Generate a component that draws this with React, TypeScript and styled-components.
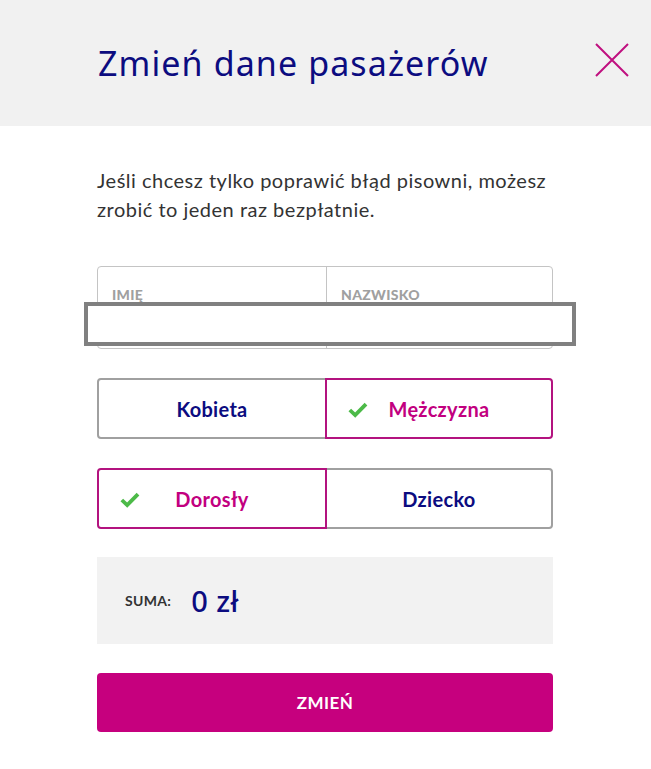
import React from "react";
import styled, { createGlobalStyle } from "styled-components";

const GlobalStyle = createGlobalStyle`
  body {
    margin: 0;
    background: #ffffff;
    font-family: Lato, "Noto Sans", sans-serif;
  }
`;

const Page = styled.div`
  width: 651px;
  min-height: 769px;
  background: #fff;
`;

const Header = styled.header`
  height: 126px;
  background: #f1f1f1;
  display: flex;
  align-items: center;
  justify-content: space-between;
  padding: 0 22px 0 98px;
  box-sizing: border-box;
`;

const Title = styled.h1`
  margin: 0;
  font-family: "Noto Sans", sans-serif;
  font-weight: 400;
  font-size: 34px;
  color: #0c0c80;
  letter-spacing: 1.1px;
`;

const CloseButton = styled.button`
  width: 34px;
  height: 34px;
  padding: 0;
  border: none;
  background: none;
  margin-top: -6px;
  cursor: pointer;
`;

const Body = styled.main`
  padding: 40px 98px 0 97px;
  display: flex;
  flex-direction: column;
`;

const Intro = styled.p`
  margin: 0 0 42px;
  font-size: 20px;
  line-height: 29px;
  letter-spacing: 0.5px;
  color: #333;
`;

const Fields = styled.div`
  position: relative;
  height: 83px;
  border: 1px solid #c4c4c4;
  border-radius: 4px;
  box-sizing: border-box;
  display: grid;
  grid-template-columns: 229px 1fr;
`;

const Field = styled.div<{ $divider?: boolean }>`
  padding: 17px 14px;
  border-right: ${(p) => (p.$divider ? "1px solid #c4c4c4" : "none")};
`;

const FieldLabel = styled.span`
  font-size: 14px;
  font-weight: 900;
  color: #a0a0a0;
  letter-spacing: 0.3px;
`;

const Redaction = styled.div`
  position: absolute;
  left: -14px;
  top: 35px;
  width: 492px;
  height: 44px;
  box-sizing: border-box;
  border: 4px solid #808080;
  background: #fff;
`;

const Toggle = styled.div`
  display: grid;
  grid-template-columns: 229px 1fr;
  height: 61px;
  margin-top: 29px;
`;

const Option = styled.button<{ $selected?: boolean; $side: "left" | "right" }>`
  position: relative;
  display: flex;
  align-items: center;
  justify-content: center;
  font-family: Lato, "Noto Sans", sans-serif;
  font-size: 20px;
  font-weight: 700;
  letter-spacing: 0.3px;
  background: #fff;
  box-sizing: border-box;
  border: ${(p) => (p.$selected ? "2px solid #b3137f" : "2px solid #a0a0a0")};
  color: ${(p) => (p.$selected ? "#c2007f" : "#0c0c80")};
  z-index: ${(p) => (p.$selected ? 1 : 0)};
  border-radius: ${(p) => (p.$side === "left" ? "4px 0 0 4px" : "0 4px 4px 0")};
  margin-left: ${(p) => (p.$side === "right" ? "-1px" : "0")};
  margin-right: ${(p) => (p.$side === "left" ? "-1px" : "0")};
  cursor: pointer;
`;

const Check = styled.svg`
  position: absolute;
  left: 21px;
  top: 50%;
  width: 20px;
  height: 16px;
  margin-top: -7px;
`;

const Summary = styled.div`
  margin-top: 28px;
  height: 87px;
  background: #f2f2f2;
  display: flex;
  align-items: center;
  padding-left: 28px;
  gap: 20px;
`;

const SumLabel = styled.span`
  font-size: 14px;
  font-weight: 700;
  color: #333;
  letter-spacing: 0.3px;
`;

const SumValue = styled.span`
  font-family: "Noto Sans", sans-serif;
  font-size: 29px;
  font-weight: 500;
  color: #0c0c80;
  letter-spacing: 0.5px;
`;

const Submit = styled.button`
  margin-top: 29px;
  height: 59px;
  border: none;
  border-radius: 4px;
  background: #c6007e;
  color: #fff;
  font-family: Lato, "Noto Sans", sans-serif;
  font-size: 17px;
  font-weight: 700;
  letter-spacing: 0.4px;
  cursor: pointer;
`;

const CheckIcon = () => (
  <Check viewBox="0 0 20 16">
    <path d="M1.8 8 L7.2 13.2 L18 2.2" fill="none" stroke="#4cba48" strokeWidth="3.8" />
  </Check>
);

export default function App() {
  return (
    <Page>
      <GlobalStyle />
      <Header>
        <Title>Zmień dane pasażerów</Title>
        <CloseButton aria-label="Zamknij">
          <svg viewBox="0 0 34 34" width="34" height="34">
            <path d="M1 1 L33 33 M33 1 L1 33" stroke="#c0107f" strokeWidth="2" />
          </svg>
        </CloseButton>
      </Header>
      <Body>
        <Intro>
          Jeśli chcesz tylko poprawić błąd pisowni, możesz
          <br />
          zrobić to jeden raz bezpłatnie.
        </Intro>
        <Fields>
          <Field $divider>
            <FieldLabel>IMIĘ</FieldLabel>
          </Field>
          <Field>
            <FieldLabel>NAZWISKO</FieldLabel>
          </Field>
          <Redaction />
        </Fields>
        <Toggle>
          <Option $side="left">Kobieta</Option>
          <Option $side="right" $selected>
            <CheckIcon />
            Mężczyzna
          </Option>
        </Toggle>
        <Toggle>
          <Option $side="left" $selected>
            <CheckIcon />
            Dorosły
          </Option>
          <Option $side="right">Dziecko</Option>
        </Toggle>
        <Summary>
          <SumLabel>SUMA:</SumLabel>
          <SumValue>0 zł</SumValue>
        </Summary>
        <Submit>ZMIEŃ</Submit>
      </Body>
    </Page>
  );
}
